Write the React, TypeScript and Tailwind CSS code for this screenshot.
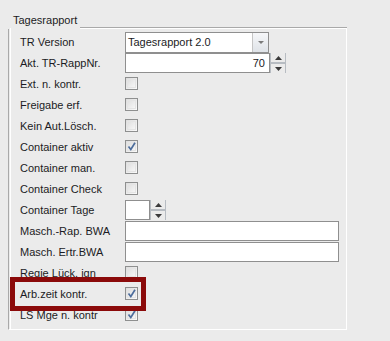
import React from "react";

const labels: { label: string; kind: "combo" | "spin" | "check" | "smallspin" | "text"; checked?: boolean }[] = [
  { label: "TR Version", kind: "combo" },
  { label: "Akt. TR-RappNr.", kind: "spin" },
  { label: "Ext. n. kontr.", kind: "check" },
  { label: "Freigabe erf.", kind: "check" },
  { label: "Kein Aut.Lösch.", kind: "check" },
  { label: "Container aktiv", kind: "check", checked: true },
  { label: "Container man.", kind: "check" },
  { label: "Container Check", kind: "check" },
  { label: "Container Tage", kind: "smallspin" },
  { label: "Masch.-Rap. BWA", kind: "text" },
  { label: "Masch. Ertr.BWA", kind: "text" },
  { label: "Regie Lück. ign", kind: "check" },
  { label: "Arb.zeit kontr.", kind: "check", checked: true },
  { label: "LS Mge n. kontr", kind: "check", checked: true },
];

function Check({ checked }: { checked?: boolean }) {
  return (
    <div className="mt-[3px] w-[13px] h-[13px] border border-[#8e8f8f] bg-gradient-to-br from-[#dcdcdc] to-[#fbfbfb] p-[1px]">
      <div className="w-full h-full border border-[#e4e4e4] bg-gradient-to-br from-[#e0e0e0] to-[#f6f6f6] relative">
        {checked && (
          <svg viewBox="0 0 9 9" className="absolute left-[-1px] top-[-1px] w-[9px] h-[9px]">
            <path d="M1.5 4.5 L3.8 7.5 L8 0.8" stroke="#4d6d9c" strokeWidth="1.7" fill="none" />
          </svg>
        )}
      </div>
    </div>
  );
}

function SpinButtons() {
  return (
    <div className="flex flex-col w-[16px] h-[20px] border-l border-r border-[#b7bcc2]">
      <div className="flex-1 flex items-center justify-center">
        <svg width="7" height="4" viewBox="0 0 7 4"><path d="M0 4 L3.5 0 L7 4Z" fill="#3a3a3a" /></svg>
      </div>
      <div className="h-[2px] bg-[#b7bcc2]" />
      <div className="flex-1 flex items-center justify-center">
        <svg width="7" height="4" viewBox="0 0 7 4"><path d="M0 0 L7 0 L3.5 4Z" fill="#3a3a3a" /></svg>
      </div>
    </div>
  );
}

function Control({ kind, checked }: { kind: string; checked?: boolean }) {
  if (kind === "combo")
    return (
      <div className="flex w-[144px] h-[21px] border border-[#8f8f8f] bg-white">
        <div className="flex-1 pl-[2px] leading-[19px]">Tagesrapport 2.0</div>
        <div className="w-[16px] border-l border-[#c5c5c5] bg-gradient-to-b from-[#f6f7f9] to-[#dfe3e8] flex items-center justify-center">
          <svg width="6" height="3" viewBox="0 0 6 3"><path d="M0 0 L6 0 L3 3Z" fill="#7a7a7a" /></svg>
        </div>
      </div>
    );
  if (kind === "spin")
    return (
      <div className="flex">
        <div className="w-[145px] h-[20px] border border-[#8f8f8f] bg-white text-right pr-[4px] leading-[18px]">70</div>
        <SpinButtons />
      </div>
    );
  if (kind === "smallspin")
    return (
      <div className="flex">
        <div className="w-[25px] h-[20px] border border-[#8f8f8f] bg-white" />
        <SpinButtons />
      </div>
    );
  if (kind === "text") return <div className="w-[214px] h-[20px] border border-[#8f8f8f] bg-white" />;
  return <Check checked={checked} />;
}

export default function App() {
  return (
    <div
      className="w-[390px] h-[341px] bg-[#ebebeb] text-[11px] text-[#1b1b24] relative overflow-hidden"
      style={{ fontFamily: '"Liberation Sans", Arial, sans-serif' }}
    >
      <div className="ml-[8px] w-[339px]">
        <div className="flex items-end h-[29px]">
          <div className="pl-[5px] pr-[3px] leading-[13px] pb-[1px] self-end mb-[1px]">Tagesrapport</div>
          <div className="flex-1 h-[2px] border-t border-[#a9a9a9] border-b border-b-white" />
        </div>
        <div className="h-[301px] border-l border-l-[#a9a9a9] border-r border-r-white border-b border-b-white relative">
          <div className="absolute left-[1px] top-[-1px] bottom-0 w-px bg-white" />
          <div className="pt-[3px]">
            {labels.map((r) => (
              <div key={r.label} className="flex h-[21px] items-start">
                <div className="w-[116px] pl-[11px] leading-[21px] whitespace-nowrap">{r.label}</div>
                <Control kind={r.kind} checked={r.checked} />
              </div>
            ))}
          </div>
        </div>
      </div>
      <div className="absolute left-[10px] top-[277px] w-[136px] h-[34px] border-[5px] border-[#8b0a0a]" />
    </div>
  );
}
